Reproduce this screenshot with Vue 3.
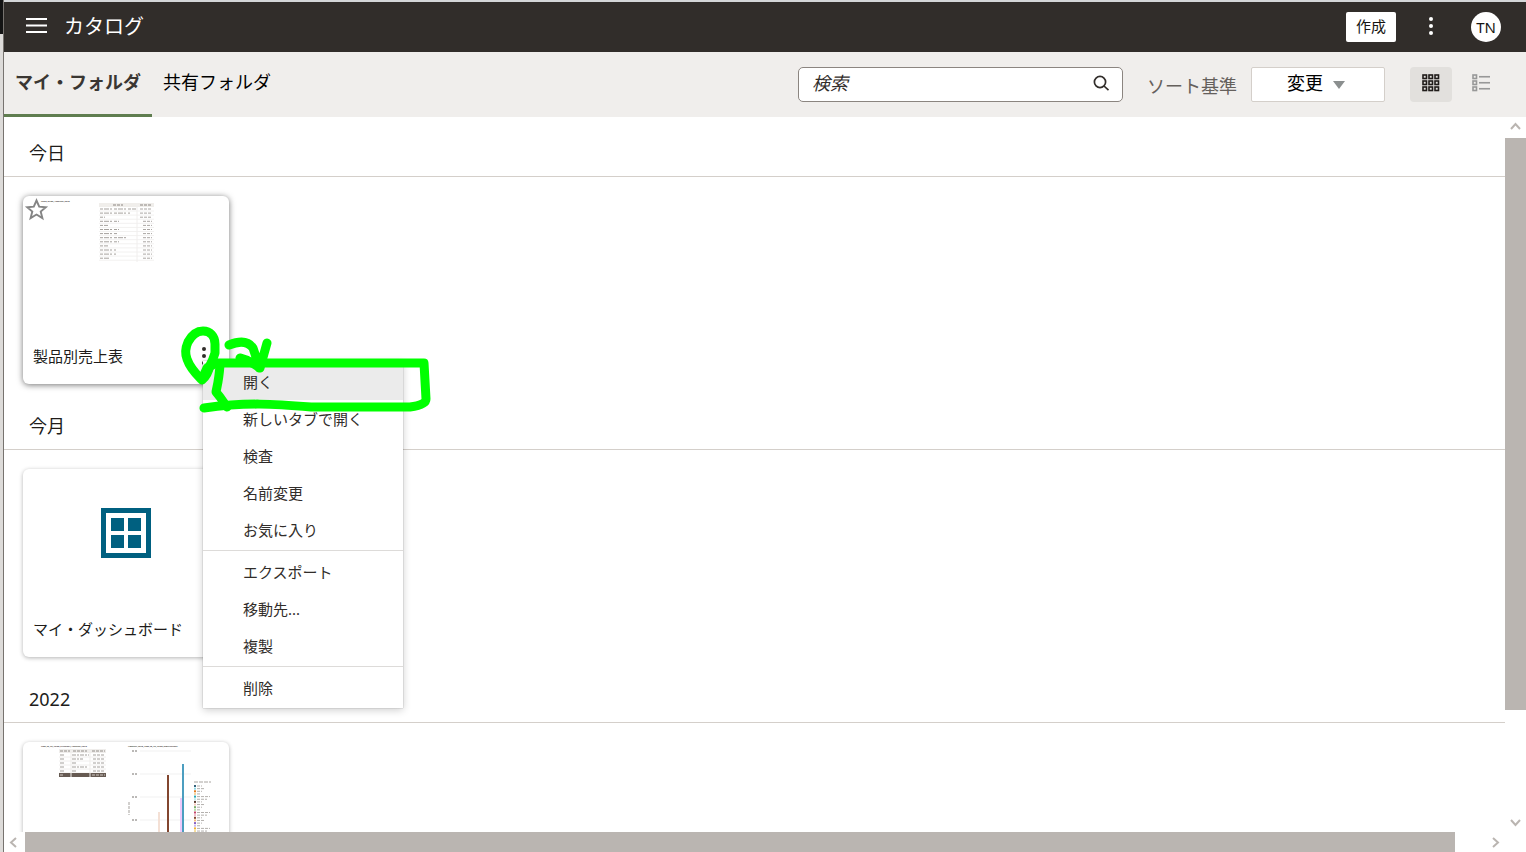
<template>
  <div class="window">
    <div class="gutter"></div>

    <div class="app">
      <header class="header">
        <button class="icon-btn nav-btn" type="button" aria-label="ナビゲータ">
          <svg width="21" height="16" viewBox="0 0 21 16">
            <path d="M0 1h21M0 7.500h21M0 14h21" stroke="#fff" stroke-width="2.200" />
          </svg>
        </button>
        <h1 class="title">カタログ</h1>
        <button class="create-btn" type="button">作成</button>
        <button class="icon-btn header-menu" type="button" aria-label="メニュー">
          <svg width="4" height="18" viewBox="0 0 4 18" fill="#fff">
            <circle cx="2" cy="2" r="2" />
            <circle cx="2" cy="9" r="2" />
            <circle cx="2" cy="16" r="2" />
          </svg>
        </button>
        <button class="avatar" type="button">TN</button>
      </header>

      <div class="toolbar">
        <nav class="tabs">
          <a
            v-for="tab in tabs"
            :key="tab"
            href="#"
            class="tab"
            :class="{ active: tab === activeTab }"
            @click.prevent="activeTab = tab"
          >{{ tab }}</a>
        </nav>

        <div class="search">
          <input v-model="query" type="text" placeholder="検索" aria-label="検索" />
          <svg width="17" height="16" viewBox="0 0 17 16" fill="none" stroke="#312d2a" stroke-width="1.700">
            <circle cx="7" cy="7" r="5.600" />
            <path d="M11 11l4.500 4.200" />
          </svg>
        </div>

        <label class="sort-label" for="sort">ソート基準</label>
        <div class="sort">
          <select id="sort" v-model="sortBy">
            <option>変更</option>
            <option>名前</option>
          </select>
          <svg width="12" height="8" viewBox="0 0 12 8"><path d="M0 0h12L6 8z" fill="#8b8f8f" /></svg>
        </div>

        <button class="view-btn selected" type="button" aria-label="グリッド・ビュー">
          <svg width="18" height="18" viewBox="0 0 18 18" fill="none" stroke="#201c1a" stroke-width="1.600">
            <template v-for="y in [1, 7, 13]" :key="y">
              <rect v-for="x in [1, 7, 13]" :key="x" :x="x" :y="y" width="3.500" height="3.500" />
            </template>
          </svg>
        </button>
        <button class="view-btn" type="button" aria-label="リスト・ビュー">
          <svg width="18" height="18" viewBox="0 0 18 18" fill="none" stroke="#989898" stroke-width="1.600">
            <template v-for="y in [1, 7, 13]" :key="y">
              <rect x="1" :y="y" width="3.500" height="3.500" />
              <path :d="`M7 ${y + 1.75}h11`" />
            </template>
          </svg>
        </button>
      </div>

      <div class="body">
        <main class="content">
          <section v-for="group in groups" :key="group.label" class="group">
            <h2 class="group-title">{{ group.label }}</h2>
            <div class="cards">
              <article class="card" :class="{ hover: group.type === 'table' }">
                <svg v-if="group.type === 'table'" class="preview" viewBox="0 0 206 140">
                  <text x="18" y="6" class="tiny">PROD_NAME, AMOUNT_SOLD</text>
                  <rect x="76" y="7" width="55" height="4" fill="#f0eeeb" />
                  <path d="M90 9h10M117 9h12" stroke="#8b8580" stroke-dasharray="3 1" />
                  <g v-for="(row, i) in tableRows" :key="i">
                    <path :d="`M77 ${13 + i * 4.1}h${row}`" stroke="#a5a19d" stroke-dasharray="3 1 5 1 2 2" />
                    <path :d="`M${i < 3 ? 117 : 120} ${13 + i * 4.1}H129`" stroke="#aaa6a3" stroke-dasharray="3 1" />
                    <path :d="`M76 ${15 + i * 4.1}h55`" stroke="#f2f1f0" stroke-width="1" />
                  </g>
                  <path d="M114 7v59" stroke="#f0eeed" />
                  <path
                    d="M13.500 4.500l2.700 6.200 6.600.500-5.100 4.400 1.700 6.500-5.900-3.600-5.900 3.600 1.700-6.500-5.100-4.400 6.600-.500z"
                    fill="none"
                    stroke="#858585"
                    stroke-width="1.900"
                  />
                </svg>

                <svg v-else-if="group.type === 'dashboard'" class="preview" viewBox="0 0 206 140">
                  <rect x="80.500" y="41.500" width="45" height="45" fill="none" stroke="#006080" stroke-width="5" />
                  <path d="M88 49h13v13H88zM105 49h13v13h-13zM88 66h13v13H88zM105 66h13v13h-13z" fill="#006080" />
                </svg>

                <svg v-else class="preview" viewBox="0 0 206 140">
                  <text x="18" y="5" class="tiny">TIME_ID, VG, PROD_CATEGORY, AMOUNT_SOLD</text>
                  <text x="105" y="5" class="tiny">AMOUNT_SOLD, TIME_ID, VG, PROD_SUBCATEGORY</text>
                  <rect x="36" y="7" width="47" height="4" fill="#efedeb" />
                  <path d="M37 9h10M50 9h14M69 9h13" stroke="#918c87" stroke-dasharray="3 1" />
                  <g v-for="i in 5" :key="i" stroke="#a39f9b">
                    <path :d="`M37 ${9 + i * 4}h4`" />
                    <path :d="`M49 ${9 + i * 4}h${[17, 11, 4, 16, 4][i - 1]}`" stroke-dasharray="4 1 2 1" />
                    <path :d="`M70 ${9 + i * 4}h12`" stroke-dasharray="3 1" />
                    <path :d="`M36 ${11 + i * 4}h47`" stroke="#f0eeed" />
                  </g>
                  <rect x="36" y="31" width="47" height="4" fill="#665a52" />
                  <path d="M37 33h3M69 33h13" stroke="#d0c9c4" stroke-dasharray="3 1" />
                  <path d="M48 7v28M67 7v28" stroke="#efedeb" />
                  <g v-for="i in 4" :key="'tick' + i">
                    <path :d="`M109 ${i * 23 - 14}h5`" stroke="#77736f" stroke-dasharray="2 1" />
                    <path :d="`M117 ${i * 23 - 14}h51`" stroke="#f1f1f1" />
                  </g>
                  <path d="M106 60v13" stroke="#a5a19d" stroke-dasharray="3 1" />
                  <path d="M136 70v30" stroke="#f4e0d5" stroke-width="2" />
                  <path d="M145 33v67" stroke="#82462f" stroke-width="2" />
                  <path d="M158 56v44" stroke="#eec9fa" stroke-width="2" />
                  <path d="M160 22v78" stroke="#4c9ec0" stroke-width="2" />
                  <path d="M171 40h17" stroke="#a8a4a0" stroke-dasharray="4 1" />
                  <g v-for="(color, i) in legend" :key="'legend' + i">
                    <rect x="171" :y="43 + i * 2.65" width="2" height="2" :fill="color" />
                    <path :d="`M174 ${44 + i * 2.65}h${[5, 8, 5, 3, 13, 10][i % 6]}`" stroke="#b3b0ad" stroke-dasharray="3 1" />
                  </g>
                </svg>

                <div class="card-footer">
                  <span class="card-name">{{ group.item }}</span>
                  <button v-if="group.type === 'table'" class="card-menu" type="button" aria-label="アクション">
                    <svg width="4" height="18" viewBox="0 0 4 18" fill="#312d2a">
                      <circle cx="2" cy="2" r="2" />
                      <circle cx="2" cy="9" r="2" />
                      <circle cx="2" cy="16" r="2" />
                    </svg>
                  </button>
                </div>

                <template v-if="group.type === 'table'">
                  <div class="menu" role="menu">
                    <div v-for="(entries, i) in menu" :key="i" class="menu-group">
                      <button
                        v-for="entry in entries"
                        :key="entry"
                        type="button"
                        role="menuitem"
                        class="menu-item"
                        :class="{ focused: entry === '開く' }"
                      >{{ entry }}</button>
                    </div>
                  </div>
                  <!-- freehand marker -->
                  <svg class="marker" width="270" height="120" viewBox="170 320 270 120">
                    <path d="M201 379C196 374 190 368 187 359Q184 351 188 342Q194 331 203 331C210 331 215 336 215 344V353Q213 360 210 365Q208 375 202 380" />
                    <path d="M229 345Q246 338 253 348Q257 359 259 368M240 358Q249 360 260 368L267 343" />
                    <path d="M202 379L207 368L216 363H424L426 399Q426 405 410 407H311C275 404 246 402 204 408" />
                    <path d="M220 365Q219 378 217 387L216 392L220 397L227 407" />
                  </svg>
                </template>
              </article>
            </div>
          </section>
        </main>

        <div class="scrollbar vertical">
          <svg width="21" height="21" viewBox="0 0 21 21"><path d="M6 12l4.500-5 4.500 5" /></svg>
          <div class="track"><div class="thumb"></div></div>
          <svg width="21" height="21" viewBox="0 0 21 21"><path d="M6 9l4.500 5L15 9" /></svg>
        </div>
        <div class="scrollbar horizontal">
          <svg width="21" height="20" viewBox="0 0 21 20"><path d="M12 6l-5 4.500L12 15" /></svg>
          <div class="track"><div class="thumb"></div></div>
          <svg width="21" height="20" viewBox="0 0 21 20"><path d="M9 6l5 4.500L9 15" /></svg>
        </div>
      </div>
    </div>
  </div>
</template>

<script setup>
import { ref } from 'vue'

const tabs = ['マイ・フォルダ', '共有フォルダ']
const activeTab = ref('マイ・フォルダ')
const query = ref('')
const sortBy = ref('変更')

const groups = [
  { label: '今日', type: 'table', item: '製品別売上表' },
  { label: '今月', type: 'dashboard', item: 'マイ・ダッシュボード' },
  { label: '2022', type: 'chart', item: '' }
]

const menu = [
  ['開く', '新しいタブで開く', '検査', '名前変更', 'お気に入り'],
  ['エクスポート', '移動先...', '複製'],
  ['削除']
]

// widths of the name column in the table preview
const tableRows = [36, 30, 5, 19, 8, 19, 17, 26, 19, 8, 16, 16, 10]

const legend = [
  '#35627b', '#8fd9e8', '#e37b20', '#f7d49e', '#2aa9b8', '#bdecee', '#5f3d32',
  '#f5c7bb', '#7cae6b', '#b6dfaa', '#c4476a', '#f2b6ca', '#82462f', '#f4b77b',
  '#8561c4', '#cbb7ef', '#f2b233', '#f7dd9c'
]
</script>

<style>
body {
  overflow: hidden;
}
</style>

<style scoped>
* {
  box-sizing: border-box;
}

.window {
  display: flex;
  height: 100vh;
  background: #fff;
  color: #201c1a;
  font-family: "Noto Sans", "Noto Sans CJK JP", sans-serif;
}

button,
input,
select {
  font-family: inherit;
  color: inherit;
}

svg {
  display: block;
}

.gutter {
  width: 4px;
  border-right: 1px solid #77736f;
  background: linear-gradient(#141414 34px, #dddbd9 34px);
}

.app {
  flex: 1;
  min-width: 0;
  display: flex;
  flex-direction: column;
  border-top: 2px solid #d4d6d8;
}

.header {
  display: flex;
  align-items: center;
  height: 50px;
  padding: 0 25px 0 22px;
  background: #312d2a;
  color: #fff;
}

.icon-btn {
  padding: 0;
  border: 0;
  background: none;
}

.nav-btn {
  padding-bottom: 2px;
}

.title {
  flex: 1;
  margin: 0 0 0 17px;
  font-size: 20px;
  font-weight: 400;
  line-height: 24px;
}

.create-btn {
  width: 50px;
  height: 30px;
  padding: 0 0 3px;
  border: 0;
  border-radius: 2px;
  background: #fff;
  color: #161513;
  font-size: 15px;
}

.header-menu {
  margin: 0 38px 0 33px;
  padding-bottom: 2px;
}

.avatar {
  width: 30px;
  height: 30px;
  padding: 0;
  border: 0;
  border-radius: 50%;
  background: #fff;
  color: #161513;
  font-size: 15px;
}

.toolbar {
  display: flex;
  align-items: center;
  height: 65px;
  padding-right: 24px;
  background: #f0eeec;
}

.tabs {
  flex: 1;
  display: flex;
  align-self: stretch;
}

.tab {
  padding: 18px 11px 0 11px;
  border-bottom: 3px solid transparent;
  color: #000;
  font-size: 18px;
  line-height: 24px;
  text-decoration: none;
}

.tab.active {
  border-color: #5f7d4f;
  color: #3a3632;
  font-weight: 700;
}

.search {
  display: flex;
  align-items: center;
  width: 325px;
  height: 35px;
  padding: 0 12px 3px 13px;
  border: 1px solid #8b8580;
  border-radius: 5px;
  background: #fff;
}

.search input {
  flex: 1;
  min-width: 0;
  height: 28px;
  padding: 0;
  border: 0;
  outline: 0;
  background: none;
  font-size: 18px;
}

.search input::placeholder {
  color: #312d2a;
  font-style: italic;
  opacity: 1;
}

.sort-label {
  margin: 0 14px 0 24px;
  color: #65605c;
  font-size: 18px;
}

.sort {
  position: relative;
}

.sort select {
  width: 134px;
  height: 35px;
  padding: 0 0 3px 35px;
  border: 1px solid #d4cfca;
  border-radius: 2px;
  appearance: none;
  background: #fff;
  color: #000;
  font-size: 18px;
}

.sort svg {
  position: absolute;
  top: 14px;
  left: 82px;
  pointer-events: none;
}

.view-btn {
  display: flex;
  justify-content: center;
  width: 42px;
  height: 35px;
  margin-left: 8px;
  padding: 7px 0 0;
  border: 0;
  border-radius: 4px;
  background: none;
}

.view-btn.selected {
  margin-left: 25px;
  background: #e2e0dd;
}

.body {
  flex: 1;
  min-height: 0;
  display: grid;
  grid-template-columns: 1fr 21px;
  grid-template-rows: 1fr 20px;
}

.content {
  min-height: 0;
  overflow: hidden;
}

.group-title {
  margin: 0;
  padding: 24px 25px 11px;
  border-bottom: 1px solid #d4cfca;
  font-size: 18px;
  font-weight: 400;
  line-height: 24px;
}

.cards {
  display: flex;
  padding: 19px 19px 6px;
}

.card {
  position: relative;
  width: 206px;
  height: 188px;
  border-radius: 6px;
  background: #fff;
  box-shadow: 0 1px 4px rgba(0, 0, 0, 0.3);
}

.card.hover {
  box-shadow: 0 1px 6px rgba(0, 0, 0, 0.55);
}

.preview {
  width: 100%;
  height: 140px;
}

.tiny {
  fill: #3a3632;
  font-size: 2px;
  font-weight: 700;
}

.card-footer {
  display: flex;
  align-items: center;
  justify-content: space-between;
  padding: 8px 23px 0 10px;
  font-size: 15px;
  line-height: 24px;
}

.card-menu {
  padding: 0;
  border: 0;
  background: none;
}

.menu {
  position: absolute;
  z-index: 2;
  top: 165px;
  left: 180px;
  width: 200px;
  background: #fff;
  box-shadow: 0 2px 8px rgba(0, 0, 0, 0.2), 0 0 1px rgba(0, 0, 0, 0.4);
}

.menu-group {
  padding: 2px 0;
}

.menu-group + .menu-group {
  border-top: 1px solid #dddbd9;
}

.menu-item {
  display: block;
  width: 100%;
  height: 37px;
  padding: 0 40px;
  border: 0;
  background: none;
  color: #312d2a;
  font-size: 15px;
  text-align: left;
}

.menu-item.focused {
  background: #ebebeb;
}

.marker {
  position: absolute;
  z-index: 3;
  top: 124px;
  left: 147px;
  fill: none;
  stroke: #0f0;
  stroke-width: 9;
  stroke-linecap: round;
  stroke-linejoin: round;
  pointer-events: none;
}

.scrollbar {
  display: flex;
  fill: none;
  stroke: #bab5b1;
  stroke-width: 2;
}

.scrollbar.vertical {
  flex-direction: column;
}

.track {
  flex: 1;
}

.thumb {
  background: #bab5b1;
}

.vertical .thumb {
  width: 100%;
  height: 85%;
}

.horizontal .thumb {
  width: 98%;
  height: 100%;
}
</style>
